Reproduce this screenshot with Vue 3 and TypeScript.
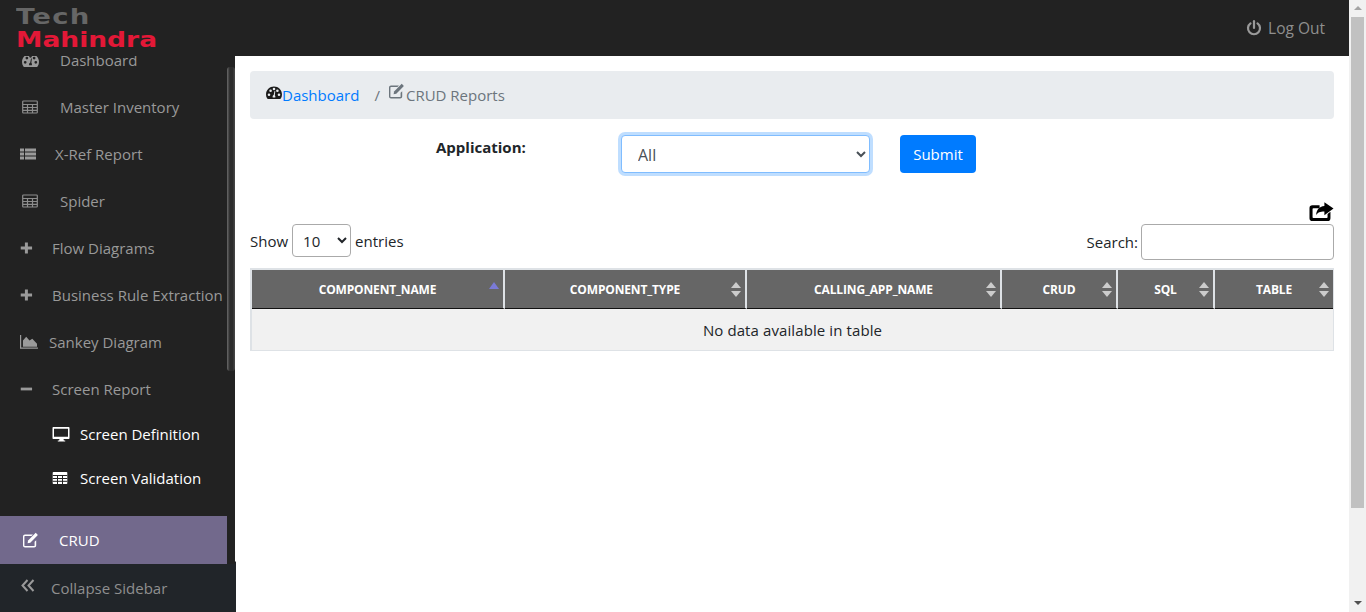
<script setup lang="ts">
interface Item { label: string; icon: string; cls: string }
const items: Item[] = [
  { label: 'Dashboard', icon: 'gauge', cls: 'i-far' },
  { label: 'Master Inventory', icon: 'table', cls: 'i-far' },
  { label: 'X-Ref Report', icon: 'list', cls: 'i-mid' },
  { label: 'Spider', icon: 'table', cls: 'i-far' },
  { label: 'Flow Diagrams', icon: 'plus', cls: 'i-near' },
  { label: 'Business Rule Extraction', icon: 'plus', cls: 'i-near' },
  { label: 'Sankey Diagram', icon: 'area', cls: 'i-area' },
  { label: 'Screen Report', icon: 'minus', cls: 'i-near' },
]
const cols = [
  { label: 'COMPONENT_NAME', w: 253, active: true },
  { label: 'COMPONENT_TYPE', w: 242, active: false },
  { label: 'CALLING_APP_NAME', w: 255, active: false },
  { label: 'CRUD', w: 116, active: false },
  { label: 'SQL', w: 97, active: false },
  { label: 'TABLE', w: 118, active: false },
]
const gaugePath = 'M8 1.5C3.6 1.5 0 5 0 9.4c0 1.5.4 2.9 1.2 4.1.2.3.5.5.8.5h12c.3 0 .6-.2.8-.5.8-1.2 1.2-2.6 1.2-4.1C16 5 12.4 1.5 8 1.5zM3 11a1.3 1.3 0 1 1 0-2.6A1.3 1.3 0 0 1 3 11zm1.6-4A1.3 1.3 0 1 1 4.6 4.4 1.3 1.3 0 0 1 4.6 7zM8 5.3a1.3 1.3 0 1 1 0-2.6 1.3 1.3 0 0 1 0 2.6zm1.3 7.2H6.7c-.3-1.300.3-2.200 1-2.400l.8-4 .8.100-.5 4c.5.400.7 1.500.5 2.300zM11.400 7a1.300 1.300 0 1 1 0-2.600 1.300 1.300 0 0 1 0 2.600zM13 11a1.300 1.300 0 1 1 0-2.600 1.300 1.300 0 0 1 0 2.600z'
const editPath = 'M2.500 2.500h8l-1.600 1.600H2.500a.6.600 0 0 0-.6.600v8.800c0 .3.300.6.600.6h9c.3 0 .6-.3.600-.6V9.800l1.600-1.600v5.300c0 1.100-.9 2-2 2H2.500c-1.100 0-2-.9-2-2V4.500c0-1.100.9-2 2-2z'
const editPen = 'M13.200.8l2.200 2.200-7.600 7.700-2.700.5.500-2.700z'
</script>

<template>
  <div class="page">
    <div class="main-col">
      <header class="topbar">
        <div class="logo" aria-label="Tech Mahindra">
          <span class="logo-tech">Tech</span>
          <span class="logo-mah">Mahindra</span>
        </div>
        <a class="logout">
          <svg class="power" viewBox="0 0 16 16" width="16" height="16">
            <path d="M4.500 3.400a6 6 0 1 0 7 0" fill="none" stroke="#9a9a9a" stroke-width="2.200" stroke-linecap="round" />
            <path d="M8 1.200v6.800" fill="none" stroke="#9a9a9a" stroke-width="2.200" stroke-linecap="round" />
          </svg>
          <span>Log Out</span>
        </a>
      </header>
      <div class="body-row">
        <aside class="sidebar">
          <div class="side-scroll">
            <ul class="menu">
              <li v-for="it in items" :key="it.label" class="menu-item" :class="it.cls">
                <span class="ic">
                  <svg v-if="it.icon === 'gauge'" class="side-gauge" viewBox="0 0 16 16" width="17" height="17"><path :d="gaugePath" fill="#9a9a9a" fill-rule="evenodd" /></svg>
                  <svg v-else-if="it.icon === 'table'" viewBox="0 0 16 14" width="16" height="14"><path d="M1.500 1h13c.5 0 .8.300.8.800v10.400c0 .5-.3.800-.8.800h-13c-.5 0-.8-.3-.8-.8V1.800c0-.5.300-.8.800-.8zM.7 4.500h14.600M.7 7.500h14.600M.7 10.300h14.600M5.500 4.500V13M10.500 4.500V13" fill="none" stroke="#8d8d8d" stroke-width="1.200" /></svg>
                  <svg v-else-if="it.icon === 'list'" viewBox="0 0 16 14" width="16" height="14"><path d="M0 1.500h4v3H0zM5 1.500h11v3H5zM0 5.500h4v3H0zM5 5.500h11v3H5zM0 9.500h4v3H0zM5 9.500h11v3H5z" fill="#9a9a9a" /></svg>
                  <svg v-else-if="it.icon === 'plus'" viewBox="0 0 14 14" width="14" height="14"><path d="M5.300 1h3.200v4.500H13v3H8.500V13H5.300V8.500H.8v-3h4.500z" fill="#9a9a9a" /></svg>
                  <svg v-else-if="it.icon === 'area'" viewBox="0 0 20 16" width="19" height="15"><path d="M.5 1v14h18.500" fill="none" stroke="#9a9a9a" stroke-width="1.300" /><path d="M3 13.500V7l3.500-4 3.500 4 3-2 5 5.500v3z" fill="#9a9a9a" /></svg>
                  <svg v-else viewBox="0 0 14 14" width="14" height="14"><path d="M.8 5.500H13v3H.8z" fill="#9a9a9a" /></svg>
                </span>
                <span>{{ it.label }}</span>
              </li>
            </ul>
            <ul class="submenu">
              <li>
                <span class="sub-ic">
                  <svg viewBox="0 0 18 16" width="18" height="16"><path d="M1.500 1h15c.6 0 1 .4 1 1v10c0 .6-.4 1-1 1h-5l.4 1.500h1.300v1H5.800v-1h1.300l.4-1.500h-6c-.6 0-1-.4-1-1V2c0-.6.400-1 1-1zm.5 1.800v7.900h14V2.800z" fill="#fff" fill-rule="evenodd" /></svg>
                </span>
                <span>Screen Definition</span>
              </li>
              <li>
                <span class="sub-ic">
                  <svg viewBox="0 0 16 14" width="16" height="14"><path d="M1.500 1h13c.5 0 .8.300.8.800v10.400c0 .5-.3.800-.8.800h-13c-.5 0-.8-.3-.8-.8V1.800c0-.5.300-.8.800-.8z" fill="#fff" /><path d="M.7 4.500h14.600M.7 7.500h14.600M.7 10.300h14.600M5.500 4.500V13M10.500 4.500V13" fill="none" stroke="#222" stroke-width="1" /></svg>
                </span>
                <span>Screen Validation</span>
              </li>
            </ul>
          </div>
          <div class="side-track"></div>
          <div class="crud-item">
            <span class="ic">
              <svg viewBox="0 0 16 16" width="17" height="16"><path :d="editPath" fill="#fff" /><path :d="editPen" fill="#fff" /></svg>
            </span>
            <span>CRUD</span>
          </div>
          <div class="collapse">
            <span class="coll-ic">
              <svg viewBox="0 0 14 13" width="14" height="13"><path d="M6.500 1L1.500 6.500l5 5.500M12.500 1l-5 5.500 5 5.500" fill="none" stroke="#9a9a9a" stroke-width="2" /></svg>
            </span>
            <span>Collapse Sidebar</span>
          </div>
        </aside>
        <main class="content">
          <nav class="crumb">
            <svg class="crumb-gauge" viewBox="0 0 16 16" width="16" height="16"><path :d="gaugePath" fill="#1b1b1b" fill-rule="evenodd" /></svg>
            <a class="crumb-link">Dashboard</a>
            <span class="crumb-sep">/</span>
            <svg class="crumb-edit" viewBox="0 0 16 16" width="17" height="16"><path :d="editPath" fill="#6c757d" /><path :d="editPen" fill="#6c757d" /></svg>
            <span class="crumb-cur">CRUD Reports</span>
          </nav>
          <form class="filter" @submit.prevent>
            <label class="app-label">Application:</label>
            <select class="app-select"><option>All</option></select>
            <button class="submit" type="submit">Submit</button>
          </form>
          <div class="export-row">
            <svg viewBox="0 0 26 21" width="25" height="21"><path d="M3.500 4H11v3H4.500c-.5 0-.8.300-.8.800v8.700c0 .5.300.8.800.8h14c.5 0 .8-.3.800-.8v-3.300l3-2.400v6.700c0 2-1.200 3-3 3H3.500c-2 0-3-1.200-3-3V7c0-2 1-3 3-3z" fill="#000" /><path d="M16 .8l9.500 6.700-9.500 6.800v-3.800c-4.500 0-7 .8-8.500 4 0-5.500 3-9 8.500-9.600z" fill="#000" /></svg>
          </div>
          <div class="dt-controls">
            <div class="dt-len">
              <span>Show</span>
              <select class="len-select"><option>10</option></select>
              <span>entries</span>
            </div>
            <div class="dt-search">
              <label>Search:</label>
              <input class="search-input" type="search" />
            </div>
          </div>
          <table class="dt">
            <thead>
              <tr>
                <th v-for="c in cols" :key="c.label" :style="{ width: c.w + 'px' }">
                  <span>{{ c.label }}</span>
                  <span v-if="c.active" class="sort-up"></span>
                  <span v-else class="sort-both"><i class="up"></i><i class="down"></i></span>
                </th>
              </tr>
            </thead>
            <tbody>
              <tr><td colspan="6">No data available in table</td></tr>
            </tbody>
          </table>
        </main>
      </div>
    </div>
    <div class="page-scroll" aria-hidden="true">
      <div class="arrow-up"></div>
      <div class="page-thumb"></div>
      <div class="arrow-down"></div>
    </div>
  </div>
</template>

<style>
html, body { margin: 0; padding: 0; overflow: hidden; }
</style>

<style scoped>
* { box-sizing: border-box; }
.page { display: flex; width: 1366px; height: 612px; overflow: hidden; background: #fff; font-family: "Open Sans", "Noto Sans", sans-serif; font-size: 15px; color: #212529; }
.main-col { flex: 1; min-width: 0; display: flex; flex-direction: column; }
.topbar { height: 56px; flex: none; background: #222; display: flex; justify-content: space-between; position: relative; z-index: 2; }
.logo { display: flex; flex-direction: column; padding: 7px 0 0 16px; font-family: "DejaVu Sans", sans-serif; font-weight: 700; font-size: 22px; }
.logo-tech { line-height: 20px; height: 23px; color: #666; letter-spacing: 1px; transform: scaleX(1.25); transform-origin: left center; }
.logo-mah { line-height: 20px; height: 20px; color: #e31837; transform: scaleX(1.205); transform-origin: left center; }
.logout { display: flex; align-items: center; gap: 6px; color: #8f8f8f; padding: 0 24px 0 0; font-size: 15.500px; }
.power { margin-top: -1px; }
.body-row { flex: 1; display: flex; min-height: 0; }
.sidebar { width: 236px; flex: none; position: relative; overflow: hidden; display: flex; flex-direction: column; color: #999; }
.side-scroll { width: 235px; height: 460px; flex: none; overflow: hidden; background: #222; }
.menu { list-style: none; margin: -20px 0 0; padding: 0; }
.menu-item { height: 47px; display: flex; align-items: center; color: #999; }
.ic { display: flex; justify-content: center; align-items: center; }
.side-gauge { margin-top: 2px; flex: none; }
.i-far { padding-left: 22px; } .i-far .ic { width: 16px; margin-right: 22px; }
.i-mid { padding-left: 20px; } .i-mid .ic { width: 16px; margin-right: 19px; }
.i-near { padding-left: 20px; } .i-near .ic { width: 13px; margin-right: 19px; }
.i-area { padding-left: 20px; } .i-area .ic { width: 19px; margin-right: 10px; }
.submenu { list-style: none; margin: 0; padding: 0; color: #fff; }
.submenu li { height: 44px; display: flex; align-items: center; }
.sub-ic { width: 29px; margin-left: 51px; display: flex; padding-left: 1px; }
.side-track { position: absolute; left: 227px; top: 11px; width: 8px; height: 304px; background: linear-gradient(90deg, #6a6a6a, #2c2c2c 35%, #2c2c2c 70%, #4a4a4a); border-radius: 3px; }
.crud-item { width: 235px; height: 48px; background: #72698c; border-right: 8px solid #222; color: #fff; display: flex; align-items: center; padding: 0 0 1px 22px; gap: 20px; flex: none; position: relative; z-index: 1; }
.collapse { flex: 1; margin-top: -3px; border-top: 1px solid #999; background: #212529; display: flex; align-items: center; padding: 1px 0 0 21px; color: #8f8f8f; }
.coll-ic { width: 30px; display: flex; margin-top: -4px; }
.content { flex: 1; min-width: 0; padding: 15px 15px 0 14px; }
.crumb { height: 48px; background: #e9ecef; border-radius: 4px; display: flex; align-items: center; padding: 0 16px; }
.crumb-gauge { margin-top: -4px; }
.crumb-link { color: #007bff; }
.crumb-sep { color: #6c757d; margin: 0 8px 0 15px; }
.crumb-edit { margin-top: -8px; margin-right: 1px; }
.crumb-cur { color: #6c757d; }
.filter { height: 70px; display: flex; align-items: flex-start; padding-top: 16px; }
.app-label { font-weight: 700; margin-left: 186px; width: 185px; line-height: 24px; }
.app-select { width: 249px; height: 38px; border: 1px solid #80bdff; border-radius: 4px; box-shadow: 0 0 0 3px rgba(0,123,255,.25); padding: 2px 12px 0; background: #fff; color: #495057; font: inherit; font-size: 16px; outline: none; }
.submit { margin-left: 30px; width: 76px; height: 38px; background: #007bff; color: #fff; border: 0; border-radius: 4px; font: inherit; }
.export-row { display: flex; justify-content: flex-end; margin-top: 12px; height: 23px; }
.dt-controls { display: flex; justify-content: space-between; height: 44px; }
.dt-len { display: flex; align-items: center; gap: 4px; height: 33px; }
.len-select { width: 59px; height: 33px; border: 1px solid #aaa; border-radius: 4px; background: #fff; font: inherit; color: #212529; padding: 0 6px; }
.dt-search { display: flex; align-items: center; gap: 3px; height: 36px; }
.search-input { width: 193px; height: 36px; border: 1px solid #aaa; border-radius: 4px; background: #fff; }
.dt { width: 1084px; border-collapse: separate; border-spacing: 0; table-layout: fixed; border: 2px solid #dee2e6; border-right-width: 1px; border-bottom-width: 1px; margin: 0; }
.dt th { height: 39px; background: #666; color: #fff; font-size: 12px; font-weight: 700; letter-spacing: -.15px; text-align: center; border-right: 2px solid #dee2e6; border-bottom: 1px solid #111; position: relative; padding: 0 14px; }
.dt th:last-child { border-right: 0; }
.dt td { height: 41px; background: #f1f1f1; text-align: center; letter-spacing: .1px; }
.sort-up { position: absolute; right: 4px; top: 12px; border-left: 5px solid transparent; border-right: 5px solid transparent; border-bottom: 7px solid #7a7ad6; }
.sort-both { position: absolute; right: 4px; top: 12px; display: flex; flex-direction: column; gap: 3px; }
.sort-both i { display: block; border-left: 5px solid transparent; border-right: 5px solid transparent; }
.sort-both .up { border-bottom: 6px solid #ccc; }
.sort-both .down { border-top: 6px solid #ccc; }
.page-scroll { width: 17px; flex: none; background: #f1f1f1; display: flex; flex-direction: column; }
.arrow-up { height: 17px; flex: none; position: relative; }
.arrow-up::after { content: ""; position: absolute; left: 5px; top: 6px; border-left: 4px solid transparent; border-right: 4px solid transparent; border-bottom: 4px solid #a3a3a3; }
.page-thumb { height: 491px; flex: none; margin: 0 2px; background: #c1c1c1; }
.arrow-down { flex: 1; position: relative; }
.arrow-down::after { content: ""; position: absolute; left: 5px; bottom: 7px; border-left: 4px solid transparent; border-right: 4px solid transparent; border-top: 4px solid #505050; }
</style>
